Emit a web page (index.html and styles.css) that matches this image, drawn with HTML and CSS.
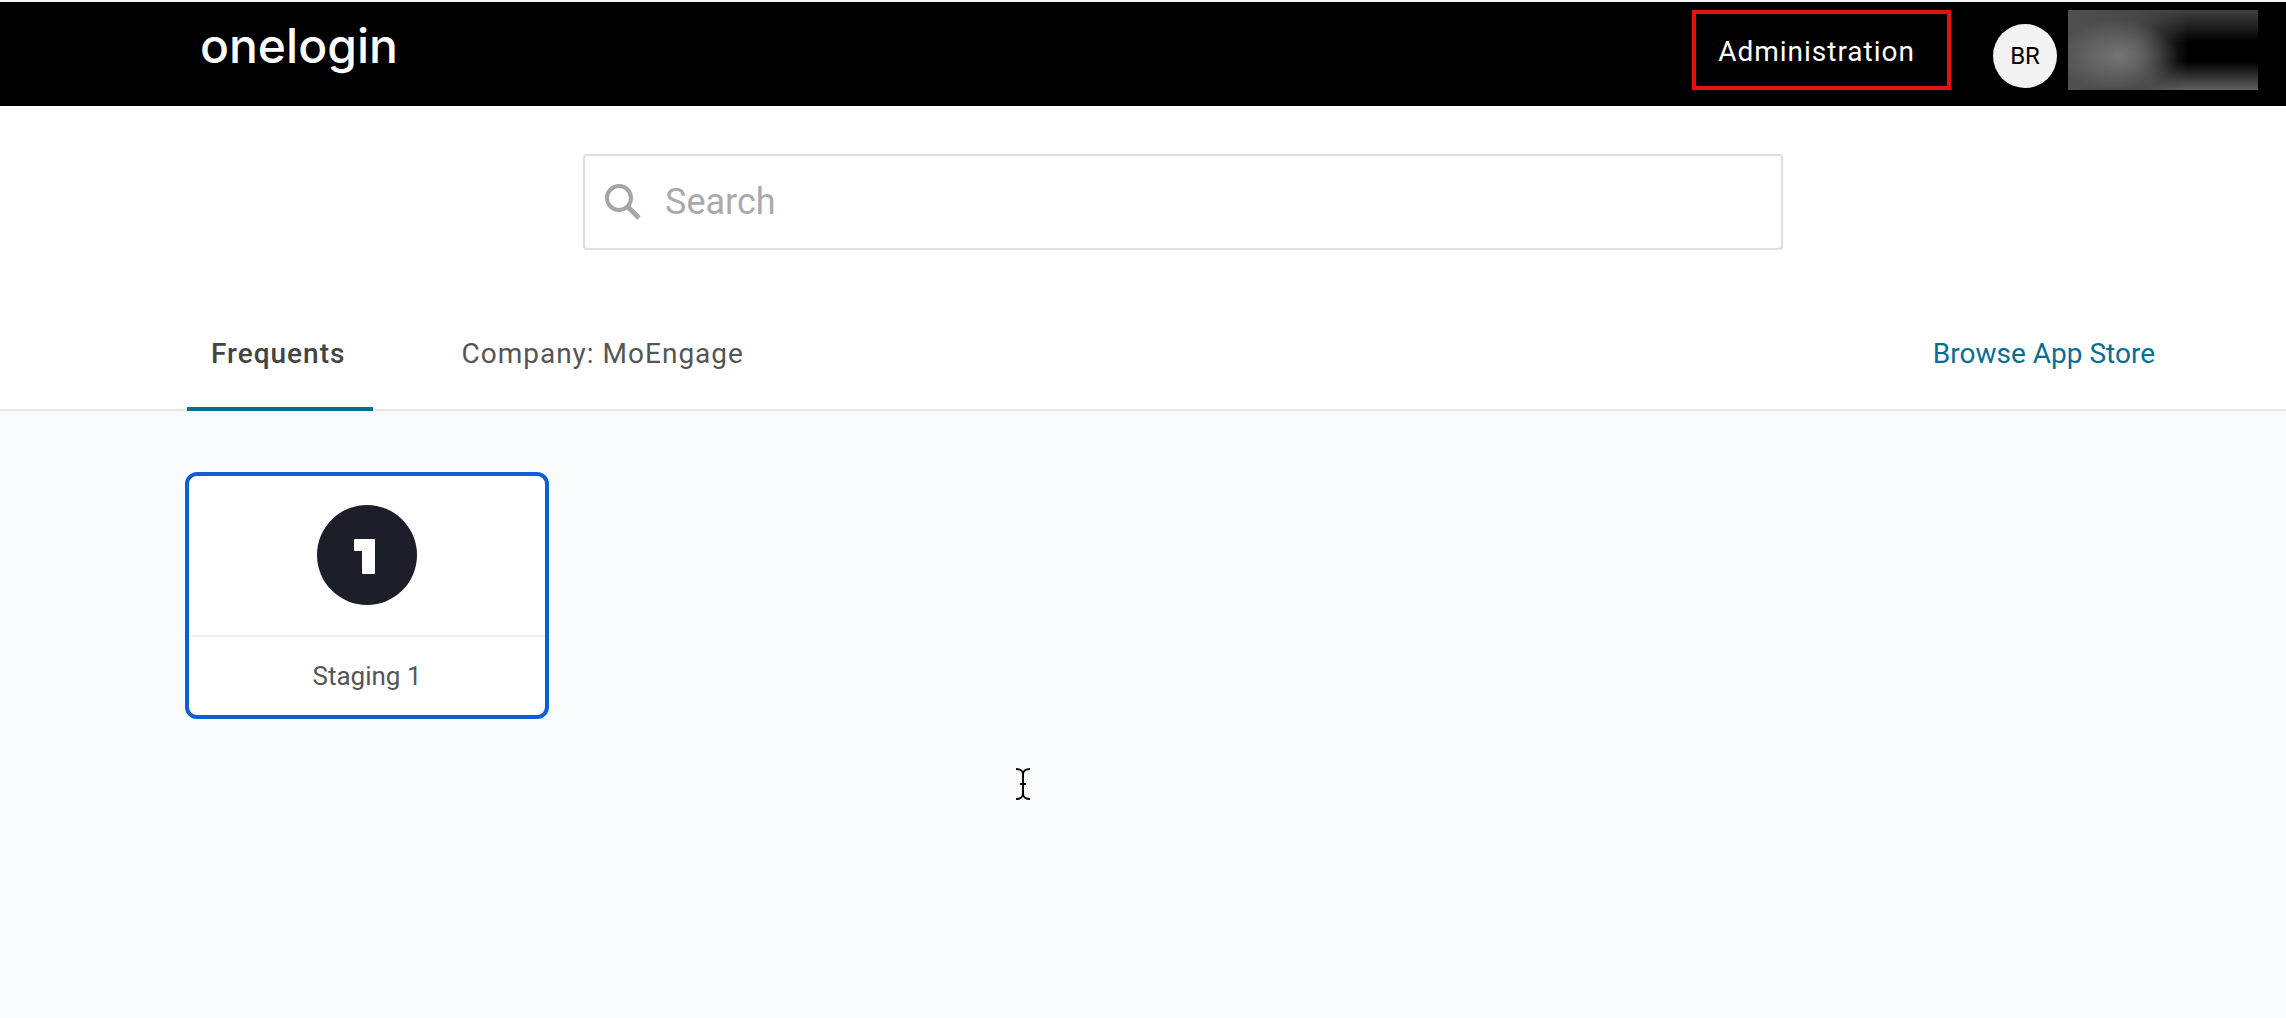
FILE: index.html
```html
<!DOCTYPE html>
<html lang="en">
  <head>
    <meta charset="UTF-8" />
    <meta name="viewport" content="width=device-width, initial-scale=1.0" />
    <title>OneLogin</title>
    <link rel="stylesheet" href="styles.css">
  </head>
  <body>
    <header class="topbar">
      <a class="logo" href="#">onelogin</a>
      <nav class="topbar-nav">
        <a class="admin-link" href="#">Administration</a>
        <button class="user-menu" type="button" aria-label="Account">
          <span class="avatar">BR</span>
          <span class="user-name"></span>
        </button>
      </nav>
    </header>
    <main>
      <div class="portal-head">
        <div class="container">
          <form class="search">
            <label for="search" aria-label="Search">
              <svg class="search-icon" viewBox="0 0 36 36">
                <circle cx="14" cy="14" r="12" fill="none" stroke="currentColor" stroke-width="4" />
                <path d="M22 22L34 34" stroke="currentColor" stroke-width="5" />
              </svg>
            </label>
            <input type="text" id="search" placeholder="Search" />
          </form>
          <nav class="tabs">
            <button class="tab active" type="button">Frequents</button>
            <button class="tab" type="button">Company: MoEngage</button>
            <a class="store-link" href="#">Browse App Store</a>
          </nav>
        </div>
      </div>
      <div class="apps">
        <div class="container">
          <a class="app-card" href="#">
            <span class="app-icon">
              <svg viewBox="0 0 100 100">
                <circle cx="50" cy="50" r="50" fill="#1c1e2a" />
                <path d="M38 34H57Q58 34 58 35V68Q58 69 57 69H46Q45 69 45 68V46H38Q37 46 37 45V35Q37 34 38 34Z" fill="#fff" />
              </svg>
            </span>
            <span class="app-name">Staging 1</span>
          </a>
        </div>
      </div>
    </main>
    <svg class="cursor" viewBox="0 0 16 34">
      <path d="M1 2C5 2 8 4 8 7V27C8 30 5 32 1 32M15 2C11 2 8 4 8 7M8 27C8 30 11 32 15 32M5 17H11" fill="none" stroke="#000" stroke-width="2" />
    </svg>
  </body>
</html>
```

FILE: styles.css
```css
* {
  box-sizing: border-box;
}
body {
  margin: 0;
  min-height: 100vh;
  font-family: Roboto, Arial, sans-serif;
  background: #f9fafc;
  color: #555;
}
a {
  text-decoration: none;
}
button {
  border: none;
  padding: 0;
  background: none;
  font-family: inherit;
  cursor: pointer;
}
.topbar {
  display: flex;
  align-items: flex-start;
  justify-content: space-between;
  height: 106px;
  padding: 8px 28px 0 200px;
  border-top: 2px solid #f5f7f8;
  background: #000;
}
.logo {
  color: #fff;
  font-family: Inter, sans-serif;
  font-size: 48px;
  font-weight: 500;
  line-height: 72px;
}
.topbar-nav {
  display: flex;
  gap: 42px;
}
.admin-link {
  height: 80px;
  padding: 0 32px 0 22px;
  border: 4px solid #e81010;
  color: #fff;
  font-size: 28px;
  letter-spacing: 1px;
  line-height: 76px;
}
.user-menu {
  display: flex;
  align-items: flex-start;
  gap: 11px;
}
.avatar {
  width: 64px;
  height: 64px;
  margin-top: 14px;
  border-radius: 50%;
  background: #f3f3f3;
  color: #000;
  font-size: 24px;
  line-height: 64px;
  text-align: center;
}
/* obscured account name */
.user-name {
  width: 190px;
  height: 80px;
  background:
    radial-gradient(ellipse 60px 36px at 50px 46px, #757575, transparent),
    linear-gradient(90deg, #505050, #484848 35%, transparent 64%),
    linear-gradient(#404040, #000 40%, #000 65%, #606060);
}
.portal-head {
  padding-left: 80px;
  border-bottom: 2px solid #e5e8e8;
  background: #fff;
}
.container {
  max-width: 1992px;
  margin: 0 auto;
}
.portal-head .container {
  padding-top: 48px;
}
.search {
  display: flex;
  align-items: center;
  gap: 24px;
  max-width: 1200px;
  height: 96px;
  margin: 0 auto;
  padding: 0 20px;
  border: 2px solid #dedfe0;
  border-radius: 4px;
}
.search-icon {
  display: block;
  width: 36px;
  height: 36px;
  color: #a5a6a8;
}
.search input {
  flex: 1;
  padding: 0;
  border: none;
  outline: none;
  background: none;
  font-family: inherit;
  font-size: 36px;
}
.search input::placeholder {
  color: #aaa;
}
.tabs {
  display: flex;
  gap: 64px;
  height: 161px;
  margin-bottom: -2px;
}
.tab {
  padding: 50px 28px 0 24px;
  border-bottom: 4px solid transparent;
  color: #555;
  font-size: 28px;
  letter-spacing: 1px;
}
.tab.active {
  border-color: #0a6c91;
  color: #444;
  font-weight: 500;
}
.store-link {
  margin-left: auto;
  padding: 50px 24px 0;
  color: #0a6c91;
  font-size: 28px;
  line-height: 108px;
}
.apps {
  padding: 61px 0 0 80px;
}
.app-card {
  display: flex;
  flex-direction: column;
  width: 364px;
  margin-left: -2px;
  border: 4px solid #0b5fd0;
  border-radius: 12px;
  background: #fff;
  color: #555;
}
.app-icon {
  display: flex;
  justify-content: center;
  padding: 29px 0 30px;
  border-bottom: 2px solid #f0f1f2;
}
.app-icon svg {
  width: 100px;
  height: 100px;
}
.app-name {
  font-size: 26px;
  line-height: 78px;
  text-align: center;
}
.cursor {
  position: absolute;
  top: 767px;
  left: 1015px;
  width: 16px;
  height: 34px;
}
```
